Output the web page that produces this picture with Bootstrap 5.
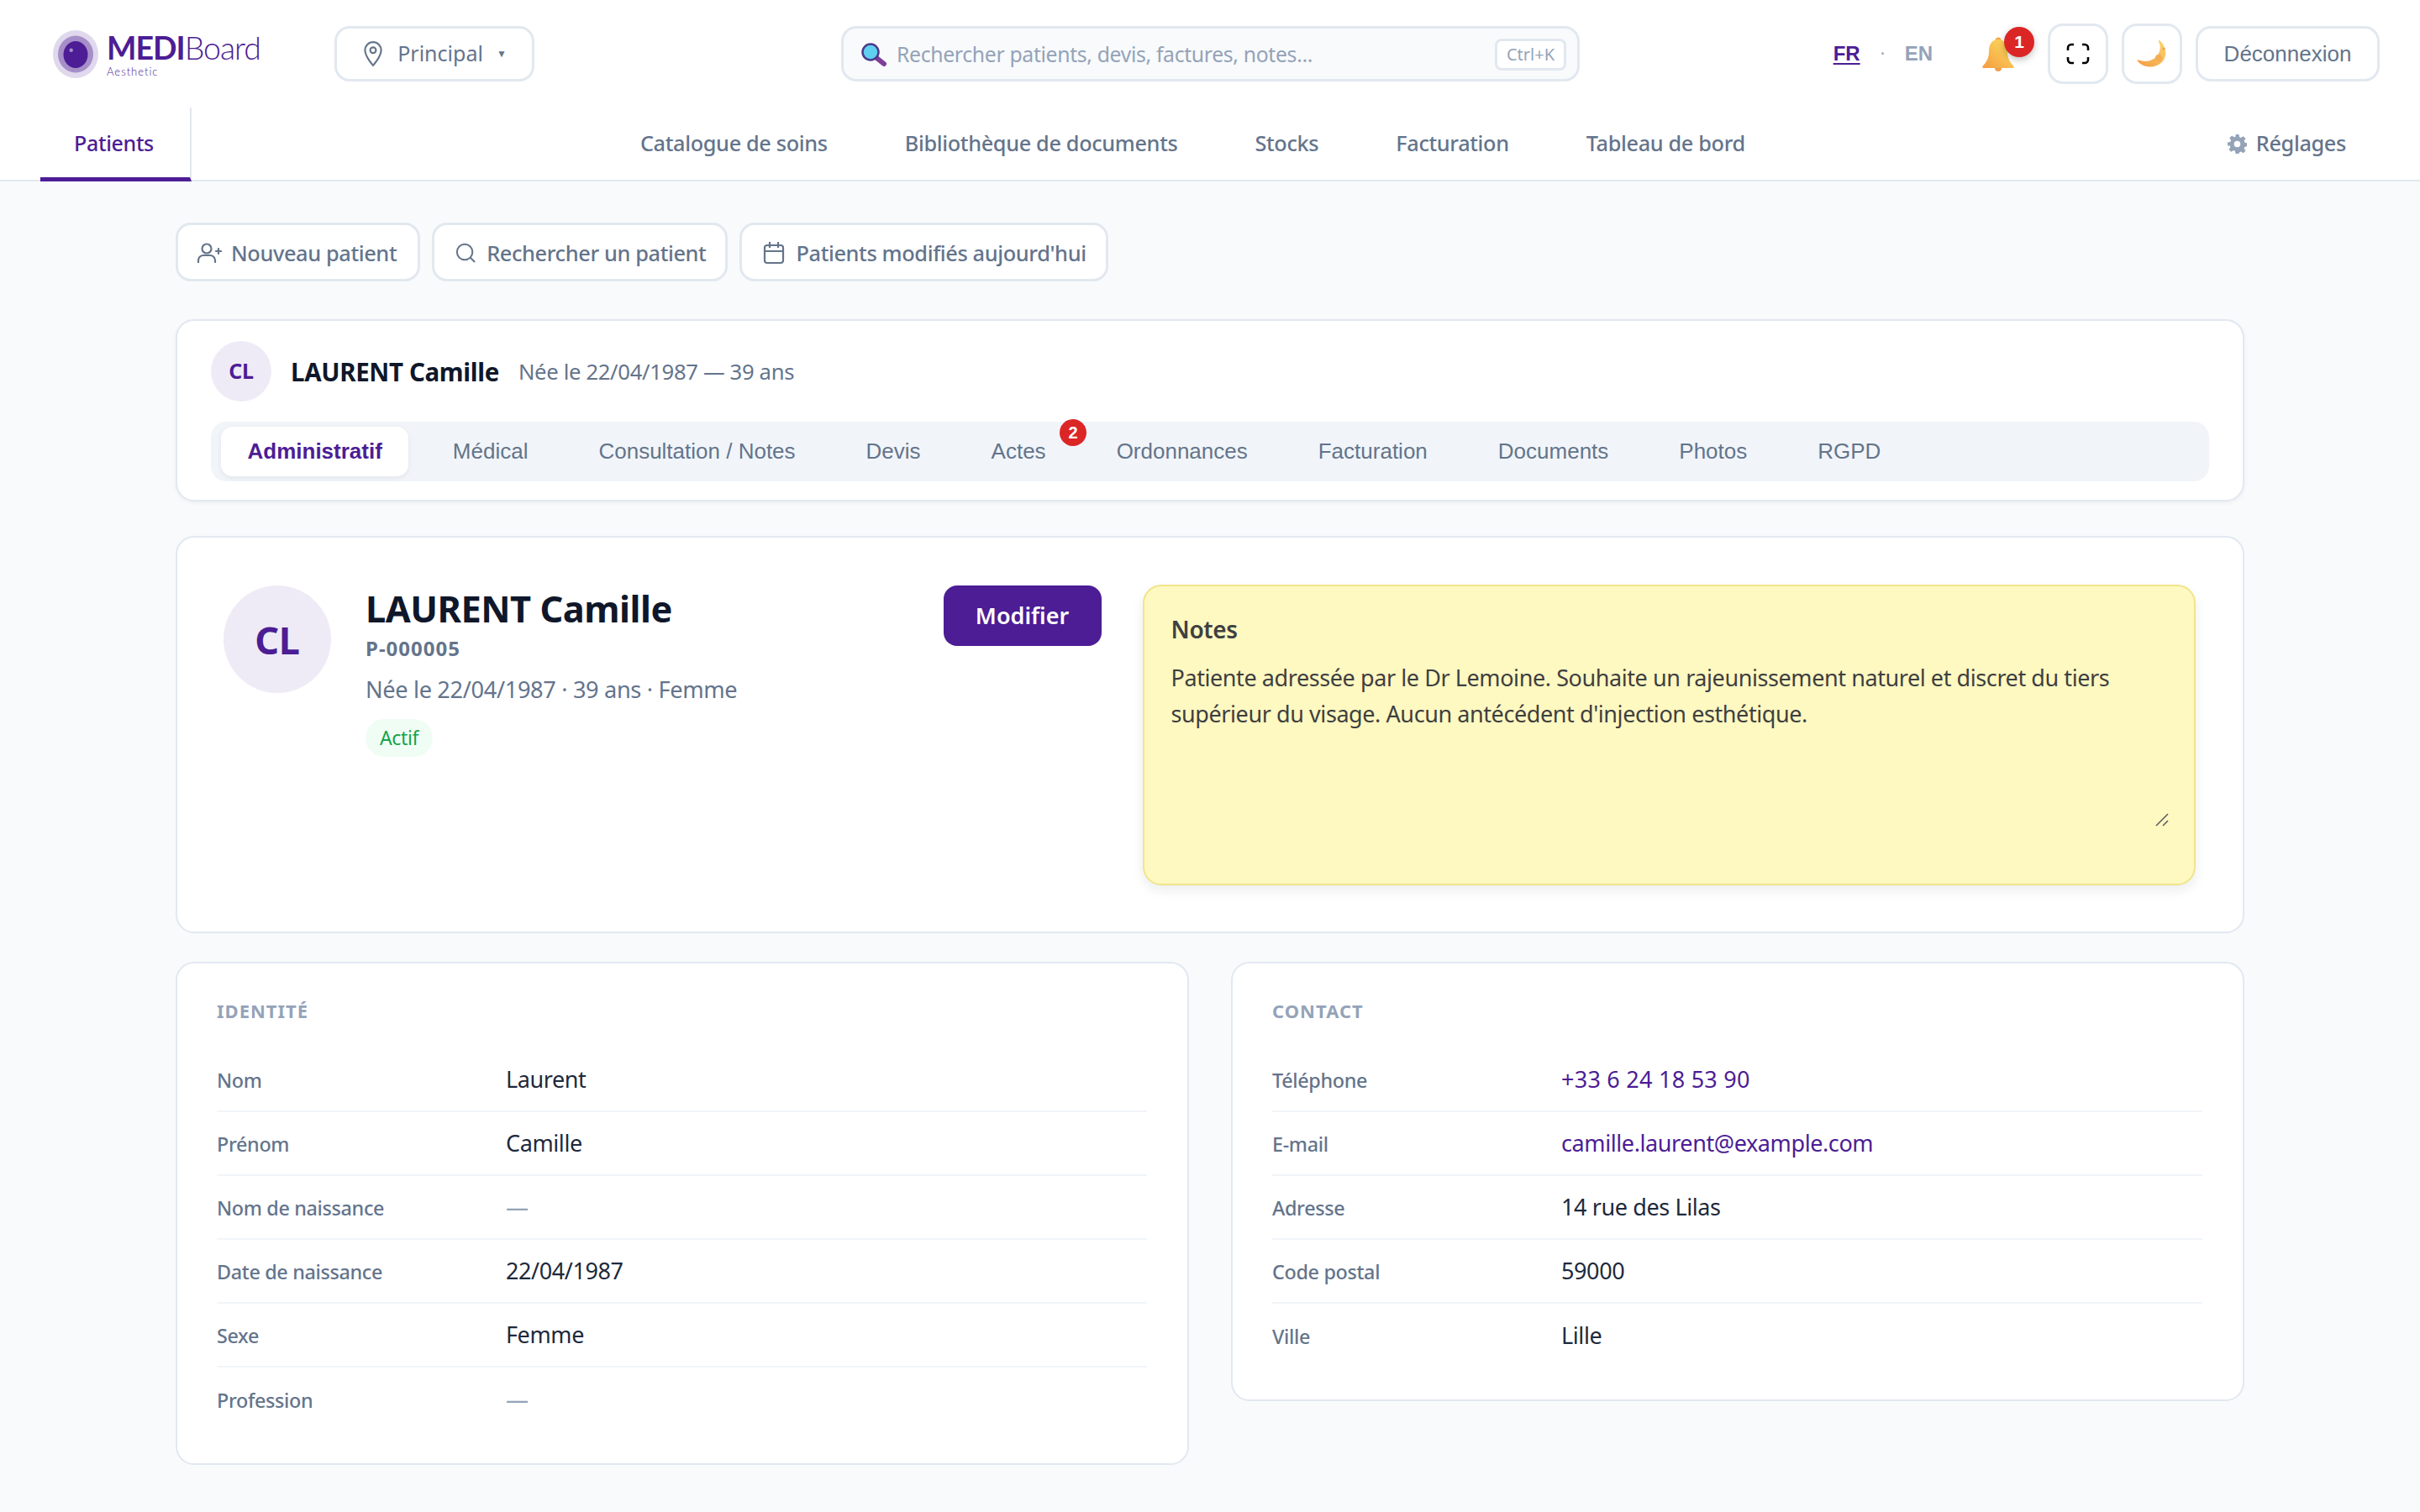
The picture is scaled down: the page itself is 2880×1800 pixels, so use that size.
<!DOCTYPE html>
<html lang="fr">
<head>
  <meta charset="UTF-8" />
  <title>MEDIBoard Aesthetic</title>
  <link href="https://cdn.jsdelivr.net/npm/bootstrap@5.3.3/dist/css/bootstrap.min.css" rel="stylesheet">
  <style>
    body { font-family: "Noto Sans", sans-serif; background-color: #f8fafc; color: #1e293b; font-size: 27px; letter-spacing: -0.35px; }
    .app-head { background: #fff; border-bottom: 2px solid #e2e8f0; height: 216px; }
    .top-bar { height: 128px; padding: 0 48px 0 63px; }
    .brand-box { width: 181px; margin-left: 10px; flex: none; }
    .brand-word { font-family: "Lato", sans-serif; font-size: 37.500px; line-height: 42px; color: #4c1d95; letter-spacing: -1px; font-weight: 300; white-space: nowrap; }
    .brand-word b { font-weight: 700; }
    .brand-sub { font-family: "Lato", sans-serif; font-size: 13px; line-height: 15px; color: #4c1d95; letter-spacing: 1px; font-weight: 300; }
    .outline-btn { background: #fff; border: 3px solid #e2e8f0; border-radius: 18px; color: #64748b; height: 66px; font-size: 25px; flex: none; }
    .site-btn { width: 238px; margin-left: 90px; }
    .site-caret { font-size: 12px; }
    .global-search { width: 879px; height: 66px; margin-left: 365px; flex: none; background: #f8fafc; border: 3px solid #e2e8f0; border-radius: 18px; color: #94a3b8; font-size: 24.800px; padding: 2px 13px 0 21px; }
    .kbd-hint { background: #fff; border: 3px solid #e2e8f0; border-radius: 8px; font-size: 20px; height: 38px; width: 85px; color: #94a3b8; letter-spacing: 0; }
    .lang-link { font-family: "Liberation Sans", sans-serif; font-weight: 700; font-size: 24px; color: #94a3b8; letter-spacing: 0; text-decoration: none; }
    .lang-link.is-on { color: #4c1d95; text-decoration: underline; text-underline-offset: 3px; margin-left: auto; }
    .lang-sep { color: #94a3b8; font-size: 20px; margin: 0 24px; }
    .bell-wrap { width: 62px; height: 56px; margin-left: 59px; margin-right: 16px; position: relative; }
    .bell-wrap svg { position: absolute; left: 0; top: 8px; }
    .notif-count { position: absolute; top: -4px; right: 0; width: 36px; height: 36px; border-radius: 50%; background: #dc2626; color: #fff; font: 700 21px/36px "Liberation Sans", sans-serif; text-align: center; box-shadow: 0 3px 8px rgba(0,0,0,.25); }
    .square-btn { width: 72px; height: 72px; background: #fff; border: 3px solid #e2e8f0; border-radius: 18px; flex: none; }
    .logout-btn { width: 219px; font-family: "Liberation Sans", sans-serif; letter-spacing: 0; font-size: 26px; }
    .tab-row { height: 88px; padding: 0 48px; }
    .main-tab { color: #64748b; font-size: 25.300px; font-weight: 500; padding: 0 46px 2px; text-decoration: none; }
    .main-tab.is-on { color: #4c1d95; font-size: 25px; width: 180px; justify-content: center; padding: 2px 3px 0 0; border-right: 2px solid #e2e8f0; border-bottom: 5px solid #4c1d95; }
    .main-tab.tail { padding: 0 40px 2px 40px; gap: 11px; }
    .page-wrap { width: 2462px; margin: 0 auto; padding-top: 49px; }
    .act-row { gap: 14px; }
    .act-btn { height: 70px; background: #fff; border: 3px solid #e2e8f0; border-radius: 18px; color: #64748b; font-size: 25.400px; font-weight: 500; letter-spacing: -.4px; padding: 2px 23px 0 25px; gap: 13px; }
    .act-btn.wide-icon { padding: 2px 25px 0 22px; gap: 11px; }
    .soft-card { background: #fff; border: 2px solid #e2e8f0; border-radius: 22px; }
    .head-card { margin-top: 45px; height: 217px; padding: 24px 40px; box-shadow: 0 2px 5px rgba(15,23,42,.05); }
    .round-mono { border-radius: 50%; background: #efebf6; color: #4c1d95; font-weight: 700; }
    .mono-sm { width: 72px; height: 72px; font-size: 25px; }
    .head-name { font-size: 29.500px; font-weight: 700; color: #0f172a; margin-left: 23px; padding-top: 2px; }
    .head-meta { font-size: 25.700px; color: #64748b; margin-left: 23px; padding-top: 2px; }
    .sub-tabs { background: #f1f5f9; border-radius: 18px; height: 71px; margin-top: 24px; padding: 6px 12px; gap: 21px; font-family: "Liberation Sans", sans-serif; letter-spacing: 0; }
    .sub-tab { color: #64748b; font-size: 26px; padding: 0 31.500px; position: relative; border-radius: 14px; }
    .sub-tab.is-on { background: #fff; color: #4c1d95; font-weight: 700; box-shadow: 0 2px 6px rgba(15,23,42,.07); }
    .sub-count { position: absolute; top: -9px; right: -17px; width: 32px; height: 32px; border-radius: 50%; background: #dc2626; color: #fff; font-size: 20px; font-weight: 700; line-height: 32px; text-align: center; }
    .profile-card { margin-top: 41px; height: 473px; padding: 57px 56px 54px 55px; display: grid; grid-template-columns: 1fr 1.2fr; column-gap: 49px; }
    .mono-lg { width: 128px; height: 128px; font-size: 45px; flex: none; padding-top: 2px; }
    .profile-name { font-size: 43.400px; font-weight: 700; color: #0f172a; line-height: 58px; letter-spacing: -.5px; margin-top: -1px; }
    .profile-id { font-size: 24px; font-weight: 700; color: #64748b; letter-spacing: 1px; line-height: 36px; }
    .profile-meta { font-size: 27.200px; color: #64748b; line-height: 48px; margin-top: 7px; }
    .status-pill { display: inline-block; background: #f0fdf4; color: #16a34a; font-size: 23px; line-height: 45px; height: 45px; border-radius: 23px; padding: 0 17px; margin-top: 11px; }
    .edit-btn { width: 188px; height: 72px; background: #4c1d95; color: #fff; border: 0; border-radius: 16px; font-size: 27px; font-weight: 600; }
    .notes-box { background: #fef8c1; border: 2px solid #f0e58a; border-radius: 22px; padding: 32px 32px; height: 358px; color: #3f3f3f; box-shadow: 0 6px 14px rgba(15,23,42,.08); position: relative; margin-top: -1px; }
    .notes-title { font-size: 28px; font-weight: 600; line-height: 38px; color: #404040; }
    .notes-text { font-size: 27px; letter-spacing: -.42px; line-height: 43px; width: 1185px; margin-top: 17px; }
    .notes-grip { position: absolute; left: 1203px; top: 270px; }
    .info-row { --bs-gutter-x: 50px; margin-top: 34px; padding-bottom: 56px; }
    .info-card { padding: 38px 48px 38px 47px; }
    .info-title { font-size: 22px; font-weight: 700; color: #94a3b8; letter-spacing: 1px; line-height: 36px; margin-bottom: 27px; }
    .info-line { height: 76px; border-bottom: 2px solid #f1f5f9; }
    .info-line:last-child { border-bottom: 0; }
    .info-key { width: 344px; font-size: 23.400px; font-weight: 500; color: #64748b; flex: none; padding-top: 4px; }
    .info-val { font-size: 27px; letter-spacing: -.4px; color: #1e293b; padding-top: 1px; }
    .info-link { color: #4c1d95; text-decoration: none; }
    .phone-no { letter-spacing: .25px; }
    .info-val.empty { color: #94a3b8; }
  </style>
</head>
<body>
  <header class="app-head">
    <div class="top-bar d-flex align-items-center">
      <svg width="54" height="57" viewBox="0 0 54 57" class="flex-shrink-0">
        <ellipse cx="27" cy="28.500" rx="27" ry="28.500" fill="#e0d8ec"/>
        <ellipse cx="27" cy="28.500" rx="21" ry="22" fill="#a68fc9"/>
        <ellipse cx="27" cy="29" rx="14.500" ry="16" fill="#4c1d95"/>
        <circle cx="21.700" cy="23.700" r="2.200" fill="#a68fc9"/>
      </svg>
      <div class="brand-box">
        <div class="brand-word"><b>MEDI</b>Board</div>
        <div class="brand-sub">Aesthetic</div>
      </div>
      <button class="outline-btn site-btn d-flex align-items-center justify-content-center gap-3">
        <svg width="26" height="32" viewBox="0 0 24 30" fill="none" stroke="#64748b" stroke-width="2"><path d="M12 28C12 28 3 18 3 11a9 9 0 0 1 18 0c0 7-9 17-9 17z"/><circle cx="12" cy="11" r="3.200"/></svg>
        <span>Principal</span><span class="site-caret">▼</span>
      </button>
      <div class="global-search d-flex align-items-center">
        <svg width="30" height="30" viewBox="0 0 30 30" class="flex-shrink-0"><path d="M17 18l10 8" stroke="#7e3f98" stroke-width="6" stroke-linecap="round"/><circle cx="11" cy="12" r="9.500" fill="#5fd0ee" stroke="#4b3a8c" stroke-width="2.500"/></svg>
        <span class="flex-grow-1" style="margin-left: 12px">Rechercher patients, devis, factures, notes...</span>
        <span class="kbd-hint d-flex align-items-center justify-content-center">Ctrl+K</span>
      </div>
      <a class="lang-link is-on" href="#">FR</a><span class="lang-sep">·</span><a class="lang-link" href="#">EN</a>
      <div class="bell-wrap">
        <svg width="38" height="42" viewBox="0 0 38 42">
          <defs><linearGradient id="bellFill" x1="0" y1="1" x2="1" y2="0"><stop offset="0" stop-color="#f59a42"/><stop offset="1" stop-color="#fce35f"/></linearGradient></defs>
          <circle cx="19" cy="4" r="3.500" fill="#f5a94b"/>
          <circle cx="19" cy="37" r="4" fill="#f2a04a"/>
          <path d="M19 3c8 0 11 7 11 14 0 8 3 13 7.500 18 .8 1 0 2-1 2H1.500c-1 0-1.800-1-1-2C5 30 8 25 8 17 8 10 11 3 19 3z" fill="url(#bellFill)"/>
        </svg>
        <span class="notif-count">1</span>
      </div>
      <button class="square-btn d-flex align-items-center justify-content-center me-3">
        <svg width="28" height="26" viewBox="0 0 28 26" fill="none" stroke="#000" stroke-width="2.600"><path d="M9 2H6a4 4 0 0 0-4 4v3M19 2h3a4 4 0 0 1 4 4v3M9 24H6a4 4 0 0 1-4-4v-3M19 24h3a4 4 0 0 0 4-4v-3"/></svg>
      </button>
      <button class="square-btn d-flex align-items-center justify-content-center me-3">
        <svg width="36" height="33" viewBox="0 0 36 33">
          <defs><linearGradient id="moonFill" x1="0" y1="1" x2="1" y2="0"><stop offset="0" stop-color="#f59a42"/><stop offset="1" stop-color="#fcd672"/></linearGradient></defs>
          <path d="M27 0c8 7 10 18 3 26-7 7-21 8-29-1-.5-1 0-2 1-1.500 9 3 17 1 22-5 4-5 5-11 2-17-.5-1 .3-2 1-1.500z" fill="url(#moonFill)"/>
          <circle cx="26" cy="21" r="4" fill="#f2ad55"/><circle cx="32" cy="10" r="1.500" fill="#ef9f4c"/><circle cx="13" cy="27" r="2" fill="#f2ad55"/>
        </svg>
      </button>
      <button class="outline-btn logout-btn">Déconnexion</button>
    </div>
    <nav class="tab-row d-flex">
      <a class="main-tab is-on d-flex align-items-center">Patients</a>
      <div class="flex-grow-1 d-flex justify-content-center">
        <a class="main-tab d-flex align-items-center">Catalogue de soins</a>
        <a class="main-tab d-flex align-items-center">Bibliothèque de documents</a>
        <a class="main-tab d-flex align-items-center">Stocks</a>
        <a class="main-tab d-flex align-items-center">Facturation</a>
        <a class="main-tab d-flex align-items-center">Tableau de bord</a>
      </div>
      <a class="main-tab tail d-flex align-items-center">
        <svg width="23" height="23" viewBox="0 0 24 24" fill="#94a3b8"><path fill-rule="evenodd" d="M10 0h4l.7 3.400 2 .9L19.600 2.400l2.800 2.800-1.900 2.900.9 2 3.400.7v4l-3.400.7-.9 2 1.900 2.900-2.800 2.800-2.900-1.900-2 .9L14 24h-4l-.7-3.400-2-.9-2.900 1.900-2.800-2.800 1.900-2.900-.9-2L0 14v-4l3.400-.7.9-2-1.900-2.900 2.800-2.800 2.900 1.900 2-.9zM12 8a4 4 0 1 0 0 8 4 4 0 0 0 0-8z"/></svg>
        Réglages
      </a>
    </nav>
  </header>

  <main class="page-wrap">
    <div class="d-flex act-row">
      <button class="act-btn wide-icon d-flex align-items-center">
        <svg width="30" height="24" viewBox="0 0 30 24" fill="none" stroke="#64748b" stroke-width="2.200"><circle cx="12" cy="7" r="5.500"/><path d="M2 23v-2a6 6 0 0 1 6-6h8a6 6 0 0 1 6 6v2M23 10h6M26 7v6" stroke-linecap="round"/></svg>
        Nouveau patient
      </button>
      <button class="act-btn d-flex align-items-center">
        <svg width="24" height="24" viewBox="0 0 26 26" fill="none" stroke="#64748b" stroke-width="2.200"><circle cx="12" cy="12" r="10"/><path d="M19 19l6 6"/></svg>
        Rechercher un patient
      </button>
      <button class="act-btn d-flex align-items-center">
        <svg width="26" height="28" viewBox="0 0 26 28" fill="none" stroke="#64748b" stroke-width="2.200"><rect x="2" y="5" width="22" height="21" rx="3"/><path d="M2 12h22M8 1v7M18 1v7"/></svg>
        Patients modifiés aujourd'hui
      </button>
    </div>

    <section class="soft-card head-card">
      <div class="d-flex align-items-center">
        <div class="round-mono mono-sm d-flex align-items-center justify-content-center">CL</div>
        <span class="head-name">LAURENT Camille</span>
        <span class="head-meta">Née le 22/04/1987 — 39 ans</span>
      </div>
      <div class="sub-tabs d-flex align-items-stretch">
        <div class="sub-tab is-on d-flex align-items-center">Administratif</div>
        <div class="sub-tab d-flex align-items-center">Médical</div>
        <div class="sub-tab d-flex align-items-center">Consultation / Notes</div>
        <div class="sub-tab d-flex align-items-center">Devis</div>
        <div class="sub-tab d-flex align-items-center">Actes<span class="sub-count">2</span></div>
        <div class="sub-tab d-flex align-items-center">Ordonnances</div>
        <div class="sub-tab d-flex align-items-center">Facturation</div>
        <div class="sub-tab d-flex align-items-center">Documents</div>
        <div class="sub-tab d-flex align-items-center">Photos</div>
        <div class="sub-tab d-flex align-items-center">RGPD</div>
      </div>
    </section>

    <section class="soft-card profile-card">
      <div class="d-flex align-items-start">
        <div class="round-mono mono-lg d-flex align-items-center justify-content-center">CL</div>
        <div class="flex-grow-1" style="margin-left: 41px">
          <div class="profile-name">LAURENT Camille</div>
          <div class="profile-id">P-000005</div>
          <div class="profile-meta">Née le 22/04/1987 · 39 ans · Femme</div>
          <span class="status-pill">Actif</span>
        </div>
        <button class="edit-btn">Modifier</button>
      </div>
      <div class="notes-box">
        <div class="notes-title">Notes</div>
        <div class="notes-text">Patiente adressée par le Dr Lemoine. Souhaite un rajeunissement naturel et discret du tiers supérieur du visage. Aucun antécédent d'injection esthétique.</div>
        <svg class="notes-grip" width="16" height="16" viewBox="0 0 16 16" fill="none" stroke="#595959" stroke-width="1.500"><path d="M1 15L15 1M9 15l6-6"/></svg>
      </div>
    </section>

    <div class="row info-row align-items-start">
      <div class="col-6">
        <section class="soft-card info-card">
          <div class="info-title">IDENTITÉ</div>
          <div class="info-line d-flex align-items-center"><span class="info-key">Nom</span><span class="info-val">Laurent</span></div>
          <div class="info-line d-flex align-items-center"><span class="info-key">Prénom</span><span class="info-val">Camille</span></div>
          <div class="info-line d-flex align-items-center"><span class="info-key">Nom de naissance</span><span class="info-val empty">—</span></div>
          <div class="info-line d-flex align-items-center"><span class="info-key">Date de naissance</span><span class="info-val">22/04/1987</span></div>
          <div class="info-line d-flex align-items-center"><span class="info-key">Sexe</span><span class="info-val">Femme</span></div>
          <div class="info-line d-flex align-items-center"><span class="info-key">Profession</span><span class="info-val empty">—</span></div>
        </section>
      </div>
      <div class="col-6">
        <section class="soft-card info-card">
          <div class="info-title">CONTACT</div>
          <div class="info-line d-flex align-items-center"><span class="info-key">Téléphone</span><span class="info-val"><a class="info-link phone-no" href="#">+33 6 24 18 53 90</a></span></div>
          <div class="info-line d-flex align-items-center"><span class="info-key">E-mail</span><span class="info-val"><a class="info-link" href="#">camille.laurent@example.com</a></span></div>
          <div class="info-line d-flex align-items-center"><span class="info-key">Adresse</span><span class="info-val">14 rue des Lilas</span></div>
          <div class="info-line d-flex align-items-center"><span class="info-key">Code postal</span><span class="info-val">59000</span></div>
          <div class="info-line d-flex align-items-center"><span class="info-key">Ville</span><span class="info-val">Lille</span></div>
        </section>
      </div>
    </div>
  </main>
  <script src="https://cdn.jsdelivr.net/npm/bootstrap@5.3.3/dist/js/bootstrap.bundle.min.js"></script>
</body>
</html>
